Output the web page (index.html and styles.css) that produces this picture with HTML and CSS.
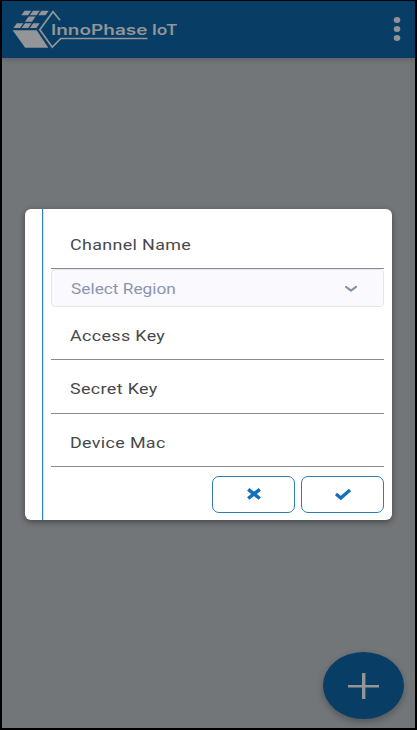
FILE: index.html
```html
<!DOCTYPE html>
<html lang="en">
<head>
<meta charset="utf-8">
<title>InnoPhase IoT</title>
<link rel="stylesheet" href="styles.css">
</head>
<body>
<div class="screen">
  <header class="bar">
    <svg class="logo" width="170" height="44" viewBox="10 6 170 44" role="img" aria-label="InnoPhase IoT">
      <g class="logo-fill">
        <path d="M24.5 10.8h6.8l-3.2 4.4h-6.8zM33 10.8h6.8l-3.2 4.4h-6.8zM41.5 10.8h7.3l-3.4 4.4h-7.1z"/>
        <path d="M28.6 16.6h7.1l-3.7 5.2h-7.1z"/>
        <path d="M16.8 23.2h6.6l-3.4 4.7h-6.6zM25 23.2h6.6l-3.4 4.7h-6.6zM33.2 23.2h6.6l-3.4 4.7h-6.6z"/>
        <path d="M12.6 30.3h24.1l11.6 17.5H25.2z"/>
      </g>
      <path class="logo-line" d="M60 20.3L53 11.7L39.8 29.8L52.3 47.2L60.8 38.5H147.5"/>
      <text class="logo-text" x="51" y="35.2" textLength="96.5" lengthAdjust="spacingAndGlyphs">InnoPhase</text>
      <text class="logo-text" x="152" y="34.6" textLength="25.5" lengthAdjust="spacingAndGlyphs">IoT</text>
    </svg>
    <svg class="dots" width="8" height="26" viewBox="0 0 8 26">
      <ellipse cx="4" cy="4" rx="3.3" ry="2.9"/><ellipse cx="4" cy="13" rx="3.3" ry="2.9"/><ellipse cx="4" cy="22" rx="3.3" ry="2.9"/>
    </svg>
  </header>
  <main class="content">
    <form class="dialog">
      <div class="fields">
        <div class="field first"><span class="label">Channel Name</span></div>
        <div class="select">
          <span class="label">Select Region</span>
          <svg width="14" height="8" viewBox="0 0 14 8"><path d="M2 1.8L7 5.6L12 1.8"/></svg>
        </div>
        <div class="field"><span class="label">Access Key</span></div>
        <div class="field"><span class="label">Secret Key</span></div>
        <div class="field"><span class="label">Device Mac</span></div>
        <div class="actions">
          <button type="button" class="btn" aria-label="Cancel">
            <svg width="16" height="14" viewBox="0 0 16 14"><path class="cross" d="M2.2 2.3L13.8 11.5M13.8 2.3L2.2 11.5"/></svg>
          </button>
          <button type="button" class="btn" aria-label="Confirm">
            <svg width="18" height="14" viewBox="0 0 18 14"><path class="check" d="M2 7L6.8 11L16 2.9"/></svg>
          </button>
        </div>
      </div>
    </form>
  </main>
  <button type="button" class="fab" aria-label="Add">
    <svg width="32" height="26" viewBox="0 0 32 26"><path d="M0 11.9h31v2.6H0zM14 0h3.4v26H14z"/></svg>
  </button>
</div>
</body>
</html>
```
FILE: styles.css
```css
* { box-sizing: border-box; }
body { margin: 0; font-family: Roboto, "Liberation Sans", sans-serif; }
.screen {
  position: relative;
  width: 417px;
  height: 730px;
  border: solid #000;
  border-width: 1px 2px 2px;
  background: #737679;
  overflow: hidden;
}
.bar {
  display: flex;
  justify-content: space-between;
  height: 57px;
  padding: 5px 14px 0 8px;
  background: #083d66;
  box-shadow: 0 1px 5px rgba(0, 0, 0, .22);
}
.logo { display: block; }
.logo-fill { fill: #939598; }
.logo-line { fill: none; stroke: #939598; stroke-width: 1.7; }
.logo-text { fill: #939598; font: 600 14.5px Inter, sans-serif; }
.dots { fill: #909295; margin-top: 10px; }
.content { padding: 151px 23px 0; }
.dialog {
  width: 367px;
  height: 311px;
  padding-left: 17px;
  border-radius: 6px;
  background: #fff;
  box-shadow: 0 2px 6px rgba(0, 0, 0, .42);
}
.fields {
  height: 311px;
  padding: 0 8px;
  border-left: 1px solid #2f82b8;
  box-shadow: inset 1px 0 #c9e8f7;
}
.field {
  display: flex;
  align-items: center;
  height: 53.3px;
  padding: 6px 0 0 19px;
  border-bottom: 1px solid #8b8b8e;
}
.field.first { height: 60px; padding-top: 12px; }
.label {
  color: #48484b;
  font-size: 15.3px;
  line-height: 20px;
  letter-spacing: .3px;
  white-space: nowrap;
  transform-origin: left;
  transform: scaleX(1.17);
}
.select {
  display: flex;
  align-items: center;
  justify-content: space-between;
  height: 38px;
  padding: 1px 25px 0 19px;
  border: 1px solid #e6e5ee;
  border-radius: 4px;
  background: #f9f9fe;
}
.select .label { color: #8c96ad; letter-spacing: 0; transform: scaleX(1.13); }
.select svg { fill: none; stroke: #8790a8; stroke-width: 2.1; stroke-linecap: round; stroke-linejoin: round; }
.actions { display: flex; justify-content: flex-end; gap: 6px; padding-top: 9.1px; }
.btn {
  display: flex;
  align-items: center;
  justify-content: center;
  width: 83px;
  height: 37px;
  padding: 0;
  border: 1px solid #2c7cb8;
  border-radius: 7px;
  background: #fff;
}
.btn path { fill: none; stroke: #1070b8; }
.cross { stroke-width: 3.5; }
.check { stroke-width: 3.3; }
.fab {
  position: absolute;
  left: 321px;
  top: 651px;
  display: flex;
  align-items: center;
  justify-content: center;
  width: 81px;
  height: 67px;
  padding: 0;
  border: 0;
  border-radius: 50%;
  background: #083d66;
  box-shadow: 0 3px 7px rgba(0, 0, 0, .28);
}
.fab svg { fill: #939598; }
```
